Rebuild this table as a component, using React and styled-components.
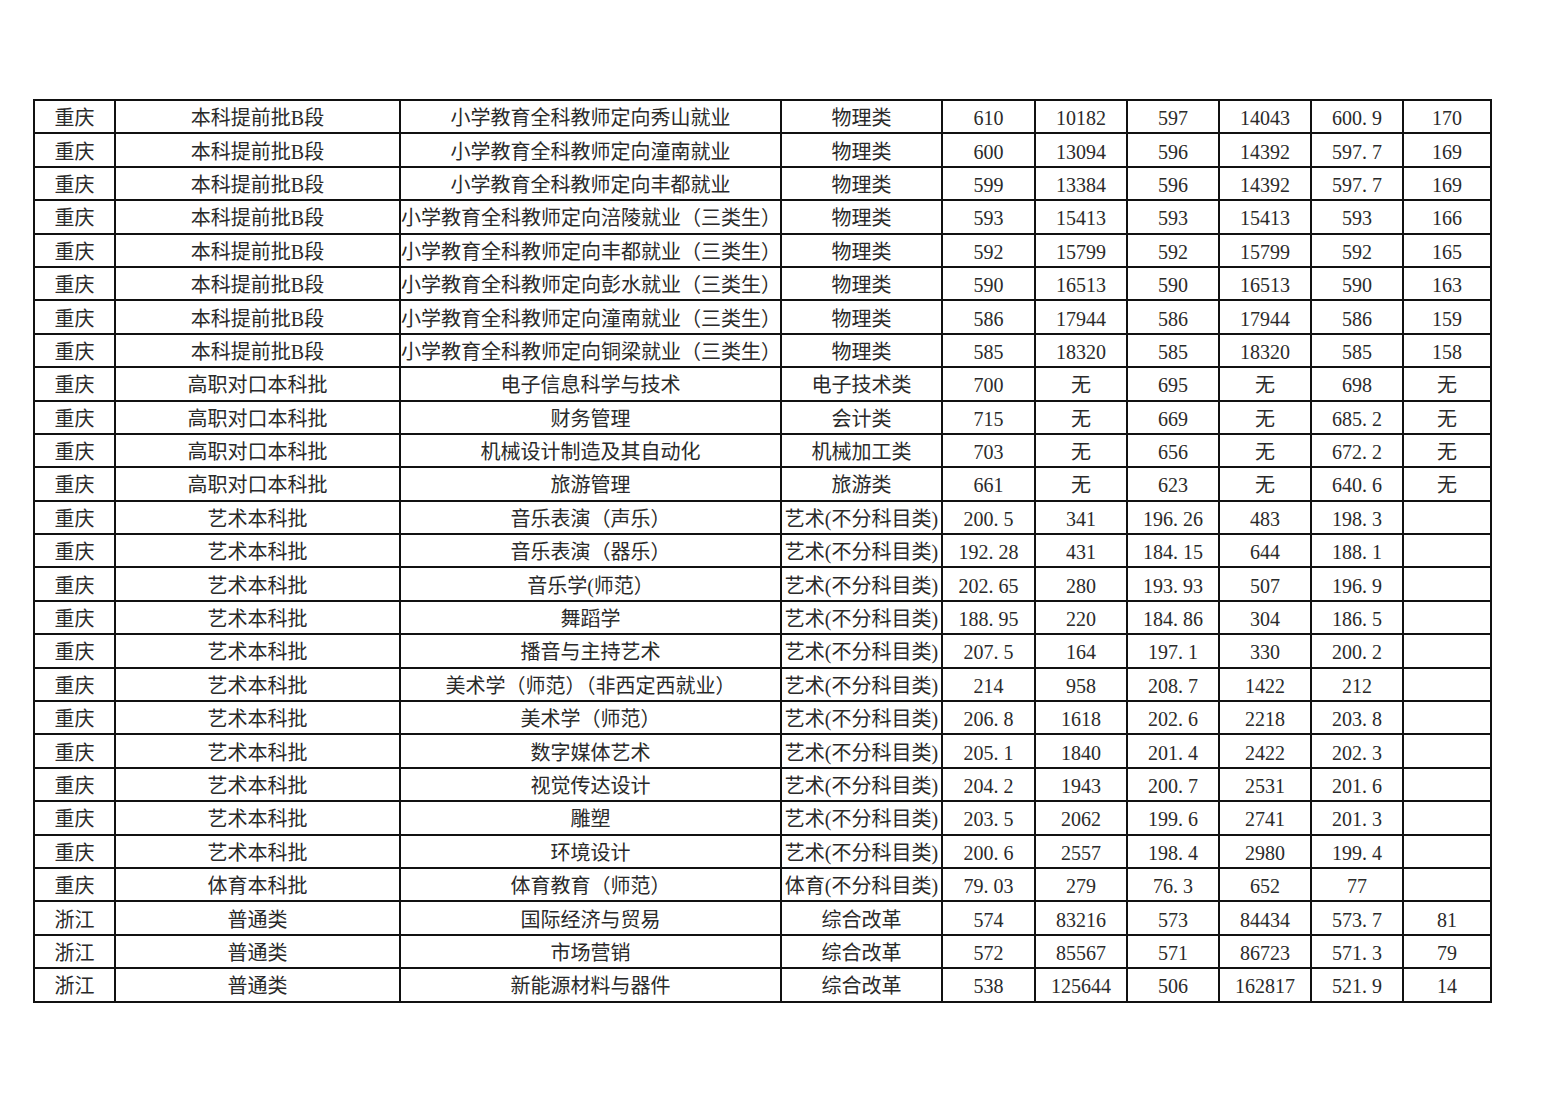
import React from "react";
import styled, { createGlobalStyle } from "styled-components";

const GlobalStyle = createGlobalStyle`
  html, body {
    margin: 0;
    padding: 0;
    background: #ffffff;
  }
`;

const Page = styled.div`
  width: 1559px;
  height: 1102px;
  padding: 99px 0 0 33px;
  box-sizing: border-box;
  background: #ffffff;
`;

const Table = styled.table`
  border-collapse: collapse;
  table-layout: fixed;
  width: 1458px;
  font-family: "Liberation Serif", "Noto Sans CJK SC", serif;
  font-size: 20px;
  color: #2a2a2a;
`;

const Cell = styled.td`
  border: 2px solid #111;
  height: 28.4px;
  padding: 3px 0 0 0;
  text-align: center;
  vertical-align: middle;
  white-space: nowrap;
  overflow: hidden;
  line-height: 28px;
`;

const widths = [81, 285, 381, 161, 93, 92, 92, 92, 92, 88];

const rows = [
  ["重庆", "本科提前批B段", "小学教育全科教师定向秀山就业", "物理类", "610", "10182", "597", "14043", "600.9", "170"],
  ["重庆", "本科提前批B段", "小学教育全科教师定向潼南就业", "物理类", "600", "13094", "596", "14392", "597.7", "169"],
  ["重庆", "本科提前批B段", "小学教育全科教师定向丰都就业", "物理类", "599", "13384", "596", "14392", "597.7", "169"],
  ["重庆", "本科提前批B段", "小学教育全科教师定向涪陵就业（三类生）", "物理类", "593", "15413", "593", "15413", "593", "166"],
  ["重庆", "本科提前批B段", "小学教育全科教师定向丰都就业（三类生）", "物理类", "592", "15799", "592", "15799", "592", "165"],
  ["重庆", "本科提前批B段", "小学教育全科教师定向彭水就业（三类生）", "物理类", "590", "16513", "590", "16513", "590", "163"],
  ["重庆", "本科提前批B段", "小学教育全科教师定向潼南就业（三类生）", "物理类", "586", "17944", "586", "17944", "586", "159"],
  ["重庆", "本科提前批B段", "小学教育全科教师定向铜梁就业（三类生）", "物理类", "585", "18320", "585", "18320", "585", "158"],
  ["重庆", "高职对口本科批", "电子信息科学与技术", "电子技术类", "700", "无", "695", "无", "698", "无"],
  ["重庆", "高职对口本科批", "财务管理", "会计类", "715", "无", "669", "无", "685.2", "无"],
  ["重庆", "高职对口本科批", "机械设计制造及其自动化", "机械加工类", "703", "无", "656", "无", "672.2", "无"],
  ["重庆", "高职对口本科批", "旅游管理", "旅游类", "661", "无", "623", "无", "640.6", "无"],
  ["重庆", "艺术本科批", "音乐表演（声乐）", "艺术(不分科目类)", "200.5", "341", "196.26", "483", "198.3", ""],
  ["重庆", "艺术本科批", "音乐表演（器乐）", "艺术(不分科目类)", "192.28", "431", "184.15", "644", "188.1", ""],
  ["重庆", "艺术本科批", "音乐学(师范）", "艺术(不分科目类)", "202.65", "280", "193.93", "507", "196.9", ""],
  ["重庆", "艺术本科批", "舞蹈学", "艺术(不分科目类)", "188.95", "220", "184.86", "304", "186.5", ""],
  ["重庆", "艺术本科批", "播音与主持艺术", "艺术(不分科目类)", "207.5", "164", "197.1", "330", "200.2", ""],
  ["重庆", "艺术本科批", "美术学（师范）（非西定西就业）", "艺术(不分科目类)", "214", "958", "208.7", "1422", "212", ""],
  ["重庆", "艺术本科批", "美术学（师范）", "艺术(不分科目类)", "206.8", "1618", "202.6", "2218", "203.8", ""],
  ["重庆", "艺术本科批", "数字媒体艺术", "艺术(不分科目类)", "205.1", "1840", "201.4", "2422", "202.3", ""],
  ["重庆", "艺术本科批", "视觉传达设计", "艺术(不分科目类)", "204.2", "1943", "200.7", "2531", "201.6", ""],
  ["重庆", "艺术本科批", "雕塑", "艺术(不分科目类)", "203.5", "2062", "199.6", "2741", "201.3", ""],
  ["重庆", "艺术本科批", "环境设计", "艺术(不分科目类)", "200.6", "2557", "198.4", "2980", "199.4", ""],
  ["重庆", "体育本科批", "体育教育（师范）", "体育(不分科目类)", "79.03", "279", "76.3", "652", "77", ""],
  ["浙江", "普通类", "国际经济与贸易", "综合改革", "574", "83216", "573", "84434", "573.7", "81"],
  ["浙江", "普通类", "市场营销", "综合改革", "572", "85567", "571", "86723", "571.3", "79"],
  ["浙江", "普通类", "新能源材料与器件", "综合改革", "538", "125644", "506", "162817", "521.9", "14"],
];

// the sheet uses wide spacing on decimals (e.g. "600. 9")
const fmt = (v) => v.replace(".", ". ");

export default function App() {
  return (
    <>
      <GlobalStyle />
      <Page>
        <Table>
          <colgroup>
            {widths.map((w, i) => (
              <col key={i} style={{ width: w }} />
            ))}
          </colgroup>
          <tbody>
            {rows.map((row, r) => (
              <tr key={r}>
                {row.map((v, c) => (
                  <Cell key={c}>{c >= 4 ? fmt(v) : v}</Cell>
                ))}
              </tr>
            ))}
          </tbody>
        </Table>
      </Page>
    </>
  );
}
